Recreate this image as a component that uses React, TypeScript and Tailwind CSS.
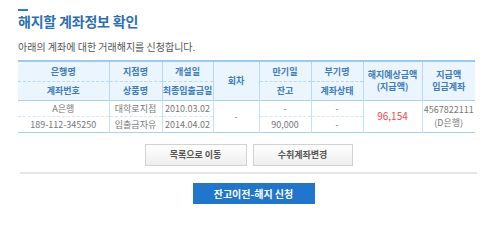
const FONT = { fontFamily: '"Noto Sans CJK KR", "Noto Sans", sans-serif' }

const th = "border-x border-[#b9d9f1] text-[#3f7cbc] font-bold text-[9px] align-middle p-0"
const td = "border-x border-[#c6e0f4] text-[#777] text-[9px] align-middle p-0"

export default function App() {
  return (
    <div className="w-[494px] h-[216px] bg-white pl-[18px] pt-[9px]" style={FONT}>
      {/* Title */}
      <div className="w-[10px] h-[2px] bg-[#2f7bc4]" />
      <h1 className="mt-[2px] text-[14px] font-bold leading-[16px] text-[#2a6fb5] tracking-[-0.2px]">
        해지할 계좌정보 확인
      </h1>
      <p className="mt-[12px] text-[10px] leading-[12px] text-[#555]">
        아래의 계좌에 대한 거래해지를 신청합니다.
      </p>

      {/* Account table */}
      <table className="mt-[7px] w-[457px] table-fixed border-collapse text-center">
        <colgroup>
          <col className="w-[91px]" />
          <col className="w-[53px]" />
          <col className="w-[51px]" />
          <col className="w-[46px]" />
          <col className="w-[52px]" />
          <col className="w-[52px]" />
          <col className="w-[59px]" />
          <col className="w-[53px]" />
        </colgroup>
        <thead className="bg-[#eaf5fd] border-t-2 border-t-[#9ccbee] border-b border-b-[#a9d2f0]">
          <tr className="h-[20px]">
            <th className={`${th} leading-none border-l-0`}>은행명</th>
            <th className={`${th} leading-none`}>지점명</th>
            <th className={`${th} leading-none`}>개설일</th>
            <th className={`${th} leading-none`} rowSpan={2}>회차</th>
            <th className={`${th} leading-none`}>만기일</th>
            <th className={`${th} leading-none`}>부기명</th>
            <th className={`${th} leading-[12px]`} rowSpan={2}>
              해지예상금액
              <br />
              (지급액)
            </th>
            <th className={`${th} border-r-0 leading-[12px]`} rowSpan={2}>
              지급액
              <br />
              입금계좌
            </th>
          </tr>
          <tr className="h-[19px] border-t border-dashed border-t-[#b9d9f1]">
            <th className={`${th} leading-none border-l-0`}>계좌번호</th>
            <th className={`${th} leading-none`}>상품명</th>
            <th className={`${th} leading-none`}>최종입출금일</th>
            <th className={`${th} leading-none`}>잔고</th>
            <th className={`${th} leading-none`}>계좌상태</th>
          </tr>
        </thead>
        <tbody className="border-b border-b-[#a9d2f0]">
          <tr className="h-[16px]">
            <td className={`${td} leading-none border-l-0`}>A은행</td>
            <td className={`${td} leading-none`}>대학로지점</td>
            <td className={`${td} leading-none`}>2010.03.02</td>
            <td className={`${td} leading-none`} rowSpan={2}>-</td>
            <td className={`${td} leading-none`}>-</td>
            <td className={`${td} leading-none`}>-</td>
            <td className={`${td} leading-none text-[10px] text-[#f2484b]`} rowSpan={2}>
              96,154
            </td>
            <td className={`${td} border-r-0 leading-[13px]`} rowSpan={2}>
              4567822111
              <br />
              (D은행)
            </td>
          </tr>
          <tr className="h-[16px] border-t border-dashed border-t-[#d3e7f6]">
            <td className={`${td} leading-none border-l-0`}>189-112-345250</td>
            <td className={`${td} leading-none`}>입출금자유</td>
            <td className={`${td} leading-none`}>2014.04.02</td>
            <td className={`${td} leading-none`}>90,000</td>
            <td className={`${td} leading-none`}>-</td>
          </tr>
        </tbody>
      </table>

      {/* Secondary actions */}
      <div className="mt-[11px] w-[457px] flex justify-center gap-[6px] pl-[4px]">
        <button className="w-[102px] h-[22px] border border-[#d2d2d2] bg-gradient-to-b from-white to-[#eeeeee] text-[9px] font-bold text-[#555]">
          목록으로 이동
        </button>
        <button className="w-[100px] h-[22px] border border-[#d2d2d2] bg-gradient-to-b from-white to-[#eeeeee] text-[9px] font-bold text-[#555]">
          수취계좌변경
        </button>
      </div>

      <div className="mt-[6px] ml-[2px] w-[457px] h-[2px] bg-[#e6e6e6]" />

      {/* Primary action */}
      <div className="mt-[9px] w-[457px] flex justify-center pl-[14px]">
        <button className="w-[122px] h-[21px] bg-[#1f76cc] text-white text-[10px] font-bold">
          잔고이전-해지 신청
        </button>
      </div>
    </div>
  )
}
